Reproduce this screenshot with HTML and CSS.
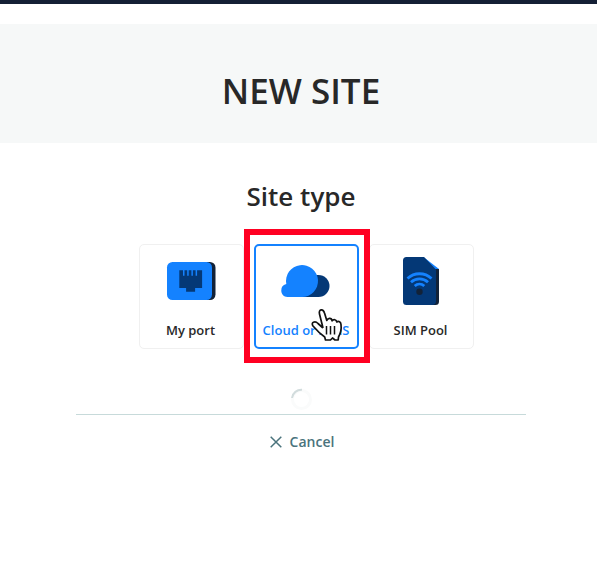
FILE: index.html
```html
<!DOCTYPE html>
<html lang="en">
<head>
<meta charset="utf-8">
<title>New site</title>
<link rel="stylesheet" href="styles.css">
</head>
<body>
<div class="topbar"></div>
<header class="banner"><h1>NEW SITE</h1></header>
<main class="content">
  <h2>Site type</h2>
  <div class="cards">
    <div class="card">
      <svg class="icon" width="50" height="50" viewBox="0 0 50 50">
        <rect x="10" y="6" width="39.5" height="38" rx="5.5" fill="#122238"/>
        <rect x="1" y="6" width="45" height="38" rx="5.5" fill="#1482ff"/>
        <path fill="#043876" d="M13.3 14.3h3.7v5.4h1.5v-5.4h2.7v5.4h1.5v-5.4h2.7v5.4h1.5v-5.4h2.7v5.4h1.5v-5.4h5v17.7h-7v3.7h-9v-3.7h-6.8z"/>
      </svg>
      <span class="label">My port</span>
    </div>
    <div class="card selected">
      <svg class="icon" width="50" height="50" viewBox="0 0 50 50">
        <path fill="#043876" d="M22 41h16.500a11 11 0 0 0 0-22H30z"/>
        <path fill="#1482ff" d="M7.300 41H22a16 16 0 1 0-15.700-13A6.600 6.600 0 0 0 7.300 41z"/>
      </svg>
      <span class="label">Cloud or XaaS</span>
      <div class="highlight"></div>
      <svg class="pointer" width="34" height="36" viewBox="0 0 34 36">
        <path fill="#fff" stroke="#111" stroke-width="1.7" stroke-linejoin="round" d="M12 20L8.500 6C7.300 .8 12.300 .5 13.500 5l2.300 7.500c1.200-3 4.800-2.700 5.300 .3 1.500-2 4.200-1.300 4.700 1.200 1.800-1.300 4 0 4.200 2.500 .8 6-.5 9-2.500 12.500l-.3 3H24l-2.500-2-2 2h-5l-.8-3C9.500 26 5 21.500 2 18c-2.500-3.500 2-5.500 5-2.500L12 20"/>
        <path fill="none" stroke="#111" stroke-width="1.500" d="M15.500 18v8.500M19.500 18v8.500M23.500 18v8.500"/>
      </svg>
    </div>
    <div class="card">
      <svg class="icon" width="50" height="50" viewBox="0 0 50 50">
        <path fill="#1482ff" d="M22 1h5.500L43 13v4H33z"/>
        <path fill="#122238" d="M33 13h10v32.500a3.500 3.500 0 0 1-3.500 3.500H33z"/>
        <path fill="#043876" d="M10.500 1H28l12 12.500v31.500a4 4 0 0 1-4 4H10.500A3.500 3.500 0 0 1 7 45.500v-41A3.500 3.500 0 0 1 10.500 1z"/>
        <circle cx="23.500" cy="35.800" r="3.200" fill="#122238"/>
        <path fill="none" stroke="#1482ff" stroke-width="2.800" d="M11.500 22.500a17.500 17.500 0 0 1 24 0M15 26.300a12.500 12.500 0 0 1 17 0M18.700 30a7.300 7.300 0 0 1 9.600 0"/>
      </svg>
      <span class="label">SIM Pool</span>
    </div>
  </div>
  <div class="loading">
    <svg width="22" height="22" viewBox="0 0 22 22">
      <circle cx="11.500" cy="11.500" r="9" fill="none" stroke="#fafbfb" stroke-width="3"/>
      <path d="M2 10A9.500 9.500 0 0 1 12 1.700" fill="none" stroke="#d2dcdd" stroke-width="2"/>
    </svg>
  </div>
  <div class="actions">
    <svg width="12" height="12" viewBox="0 0 12 12"><path d="M.7.7l10.600 10.600M11.300.7L.7 11.300" stroke="#4a737c" stroke-width="1.500"/></svg>
    <span>Cancel</span>
  </div>
</main>
</body>
</html>
```
FILE: styles.css
```css
* { box-sizing: border-box; }
body {
  margin: 0;
  width: 602px;
  height: 564px;
  background: #fff;
  color: #282828;
  font-family: "Open Sans", "Noto Sans", sans-serif;
}
html { overflow: hidden; }
.topbar { height: 4px; background: #142035; }
.banner {
  margin-top: 20px;
  height: 119px;
  background: #f6f8f8;
  display: flex;
  align-items: center;
  justify-content: center;
  padding-top: 15px;
}
h1 { margin: 0; font-size: 35px; line-height: 48px; font-weight: 600; }
.content {
  display: flex;
  flex-direction: column;
  align-items: center;
  padding-top: 35px;
}
h2 { margin: 0; font-size: 26px; line-height: 36px; font-weight: 600; }
.cards { display: flex; gap: 10px; margin-top: 30px; padding-left: 11px; }
.card {
  position: relative;
  width: 105px;
  height: 105px;
  border: 1px solid #f0f0f0;
  border-radius: 5px;
  display: flex;
  flex-direction: column;
  align-items: center;
  padding: 11px 2px 0 0;
}
.selected { z-index: 1; border: 2px solid #1482ff; padding: 10px 3px 0 0; color: #1482ff; }
.selected .label { padding-left: 2px; }
.icon { display: block; }
.label { margin-top: 15px; font-size: 13px; line-height: 18px; font-weight: 600; white-space: nowrap; }
.highlight {
  position: absolute;
  left: -12px;
  top: -17px;
  width: 126px;
  height: 134px;
  border: 6px solid #ff0022;
}
.pointer { position: absolute; left: 55px; top: 62px; }
.loading { height: 66px; width: 450px; border-bottom: 1px solid #c7dada; display: flex; justify-content: center; padding-top: 39px; }
.actions {
  display: flex;
  align-items: center;
  gap: 8px;
  margin-top: 17px;
  padding-left: 2px;
  color: #4a737c;
  font-size: 14px;
  line-height: 20px;
  font-weight: 600;
}
```
